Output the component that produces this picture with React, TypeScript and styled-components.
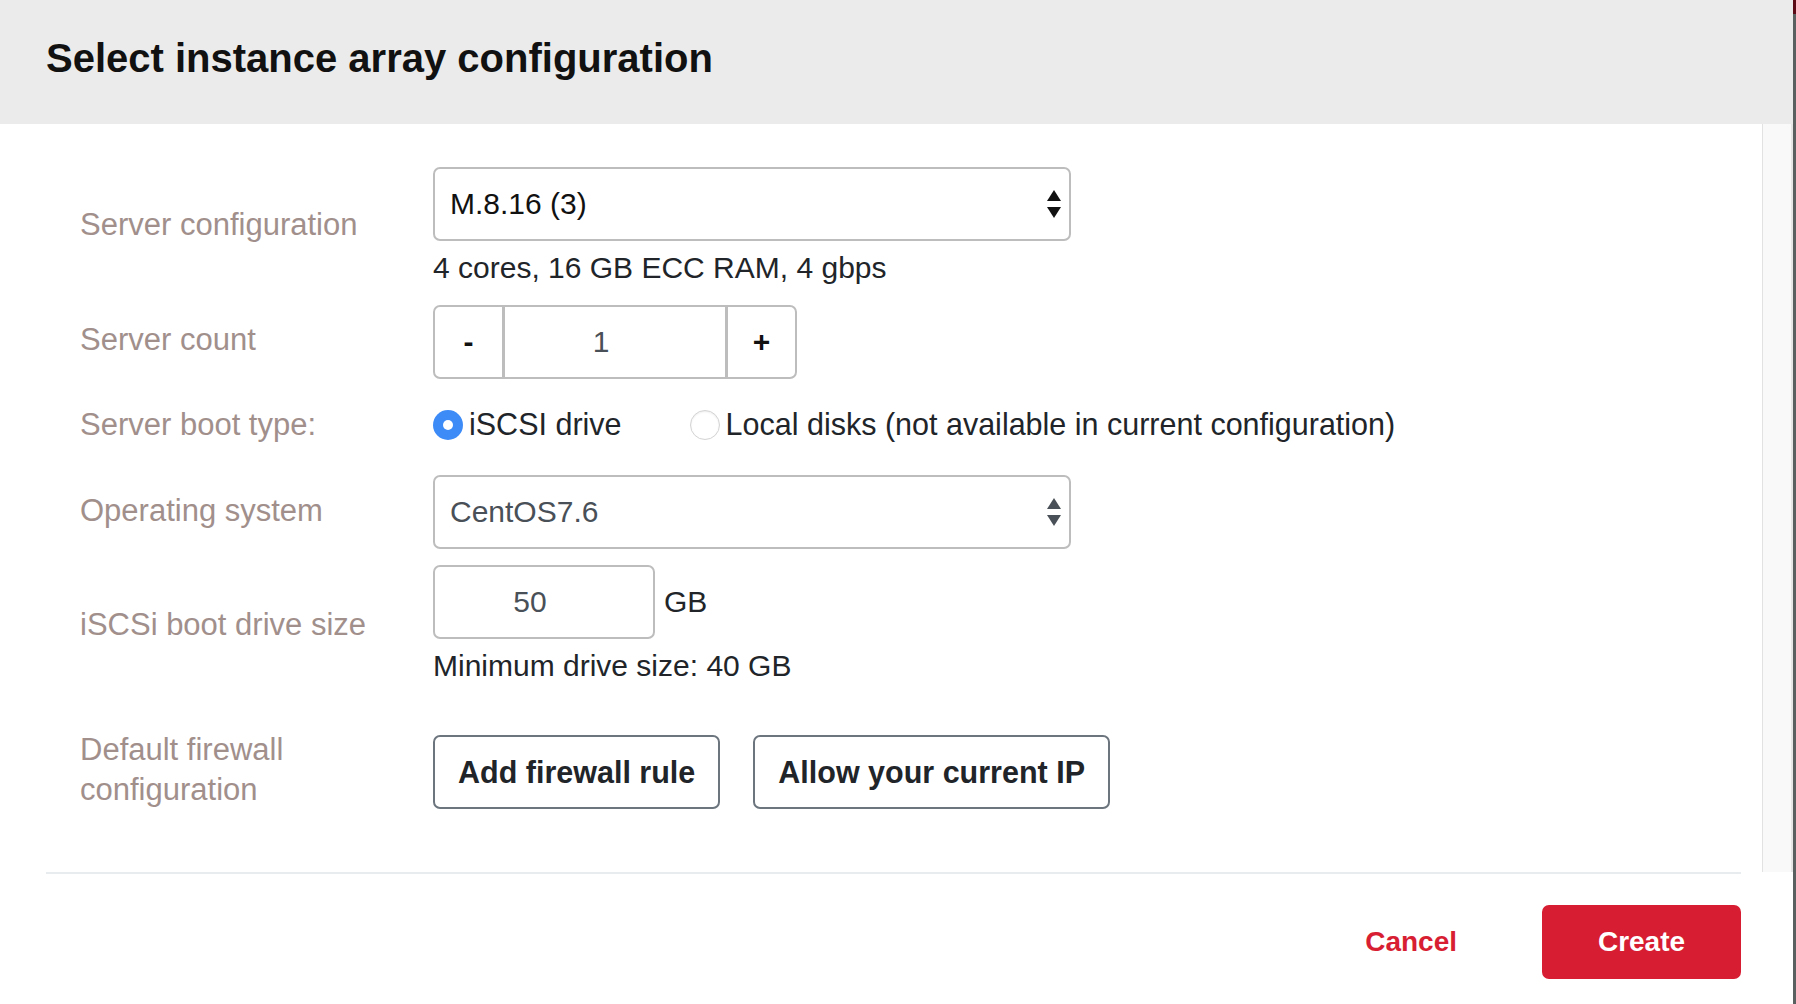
import React from "react";
import styled, { createGlobalStyle } from "styled-components";

const Global = createGlobalStyle`
  html, body { margin: 0; padding: 0; }
  body {
    background: #5a5f60;
    font-family: "Liberation Sans", Arial, sans-serif;
    overflow: hidden;
  }
  * { box-sizing: border-box; }
`;

const Page = styled.div`
  display: flex;
  width: 1796px;
  height: 1004px;
`;

const Modal = styled.div`
  width: 1793px;
  height: 1004px;
  background: #ffffff;
  display: flex;
  flex-direction: column;
`;

const Edge = styled.div`
  width: 3px;
  height: 1004px;
  background: linear-gradient(to bottom, #5c0a16 0, #5c0a16 14px, #5a5f60 14px);
`;

const Header = styled.div`
  height: 124px;
  background: #ebebeb;
  padding: 34px 46px 0;
`;

const Title = styled.h1`
  margin: 0;
  font-size: 40px;
  line-height: 48px;
  font-weight: 700;
  color: #111111;
`;

const Body = styled.div`
  height: 748px;
  display: flex;
`;

const Content = styled.div`
  flex: 1;
  padding: 43px 0 0 80px;
`;

const Track = styled.div`
  width: 31px;
  background: #f9f9f9;
  border-left: 1px solid #e2e2e2;
  border-right: 2px solid #e6e6e6;
`;

const Row = styled.div<{ $mt: number }>`
  display: grid;
  grid-template-columns: 353px 1fr;
  align-items: center;
  margin-top: ${(p) => p.$mt}px;
`;

const Label = styled.div<{ $lift?: number }>`
  width: 300px;
  font-size: 31px;
  line-height: 40px;
  color: #a18f8c;
  margin-bottom: ${(p) => (p.$lift ?? 0) * 2}px;
`;

const Field = styled.div`
  display: flex;
  flex-direction: column;
  align-items: flex-start;
`;

const Inline = styled.div<{ $gap: number }>`
  display: flex;
  align-items: center;
  gap: ${(p) => p.$gap}px;
`;

const SelectBox = styled.div<{ $muted?: boolean }>`
  width: 638px;
  height: 74px;
  border: 2px solid #bdbdbd;
  border-radius: 7px;
  display: flex;
  align-items: center;
  justify-content: space-between;
  padding: 0 7px 0 15px;
  font-size: 30px;
  color: ${(p) => (p.$muted ? "#495057" : "#111111")};
`;

const Help = styled.div`
  margin-top: 4px;
  font-size: 30px;
  line-height: 45px;
  color: #212529;
`;

const Stepper = styled.div`
  display: flex;
  height: 74px;
  border: 2px solid #bdbdbd;
  border-radius: 7px;
  overflow: hidden;
`;

const StepButton = styled.div`
  width: 67px;
  display: flex;
  align-items: center;
  justify-content: center;
  font-size: 30px;
  font-weight: 700;
  color: #111111;
`;

const StepValue = styled.div`
  width: 226px;
  border-left: 3px solid #bdbdbd;
  border-right: 3px solid #bdbdbd;
  display: flex;
  align-items: center;
  justify-content: center;
  padding-right: 28px;
  font-size: 30px;
  color: #495057;
`;

const RadioOption = styled.label`
  display: flex;
  align-items: center;
  gap: 6px;
  font-size: 30.5px;
  line-height: 45px;
  color: #212529;
`;

const RadioDot = styled.span<{ $checked?: boolean }>`
  width: 30px;
  height: 30px;
  border-radius: 50%;
  display: flex;
  align-items: center;
  justify-content: center;
  background: ${(p) => (p.$checked ? "#3d8bf7" : "#ffffff")};
  border: ${(p) => (p.$checked ? "none" : "1.5px solid #d3d3d3")};
  box-shadow: ${(p) => (p.$checked ? "none" : "inset 0 1px 2px rgba(0,0,0,0.08)")};
  &::after {
    content: "";
    display: ${(p) => (p.$checked ? "block" : "none")};
    width: 10px;
    height: 10px;
    border-radius: 50%;
    background: #ffffff;
  }
`;

const SizeInput = styled.div`
  width: 222px;
  height: 74px;
  border: 2px solid #bdbdbd;
  border-radius: 7px;
  display: flex;
  align-items: center;
  justify-content: center;
  padding-right: 28px;
  font-size: 30px;
  color: #495057;
`;

const Unit = styled.span`
  font-size: 30px;
  color: #212529;
`;

const OutlineButton = styled.button`
  height: 74px;
  padding: 0 23px;
  border: 2px solid #6c757d;
  border-radius: 7px;
  background: #ffffff;
  font-family: inherit;
  font-size: 30.5px;
  font-weight: 700;
  color: #212529;
`;

const Footer = styled.div`
  margin: 0 52px 0 46px;
  border-top: 2px solid #e8ecef;
  padding-top: 31px;
  display: flex;
  justify-content: flex-end;
  align-items: center;
  gap: 41px;
`;

const LinkButton = styled.button`
  height: 73px;
  padding: 0 44px;
  border: none;
  background: transparent;
  font-family: inherit;
  font-size: 28px;
  font-weight: 700;
  color: #d71e32;
`;

const PrimaryButton = styled.button`
  width: 199px;
  height: 74px;
  border: none;
  border-radius: 7px;
  background: #d71d31;
  font-family: inherit;
  font-size: 28px;
  font-weight: 700;
  color: #ffffff;
`;

const Arrows = ({ color }: { color: string }) => (
  <svg width="16" height="30" viewBox="0 0 16 30">
    <polygon points="8,1 15,12 1,12" fill={color} />
    <polygon points="1,18 15,18 8,29" fill={color} />
  </svg>
);

export default function App() {
  return (
    <Page>
      <Global />
      <Modal>
        <Header>
          <Title>Select instance array configuration</Title>
        </Header>
        <Body>
          <Content>
            <Row $mt={0}>
              <Label $lift={4}>Server configuration</Label>
              <Field>
                <SelectBox>
                  <span>M.8.16 (3)</span>
                  <Arrows color="#111111" />
                </SelectBox>
                <Help>4 cores, 16 GB ECC RAM, 4 gbps</Help>
              </Field>
            </Row>
            <Row $mt={15}>
              <Label $lift={2}>Server count</Label>
              <Field>
                <Stepper>
                  <StepButton>-</StepButton>
                  <StepValue>1</StepValue>
                  <StepButton>+</StepButton>
                </Stepper>
              </Field>
            </Row>
            <Row $mt={23}>
              <Label>Server boot type:</Label>
              <Inline $gap={68}>
                <RadioOption>
                  <RadioDot $checked />
                  iSCSI drive
                </RadioOption>
                <RadioOption>
                  <RadioDot />
                  Local disks (not available in current configuration)
                </RadioOption>
              </Inline>
            </Row>
            <Row $mt={28}>
              <Label $lift={1}>Operating system</Label>
              <Field>
                <SelectBox $muted>
                  <span>CentOS7.6</span>
                  <Arrows color="#495057" />
                </SelectBox>
              </Field>
            </Row>
            <Row $mt={16}>
              <Label $lift={2}>iSCSi boot drive size</Label>
              <Field>
                <Inline $gap={9}>
                  <SizeInput>50</SizeInput>
                  <Unit>GB</Unit>
                </Inline>
                <Help>Minimum drive size: 40 GB</Help>
              </Field>
            </Row>
            <Row $mt={42}>
              <Label $lift={2}>Default firewall configuration</Label>
              <Inline $gap={33}>
                <OutlineButton>Add firewall rule</OutlineButton>
                <OutlineButton>Allow your current IP</OutlineButton>
              </Inline>
            </Row>
          </Content>
          <Track />
        </Body>
        <Footer>
          <LinkButton>Cancel</LinkButton>
          <PrimaryButton>Create</PrimaryButton>
        </Footer>
      </Modal>
      <Edge />
    </Page>
  );
}
